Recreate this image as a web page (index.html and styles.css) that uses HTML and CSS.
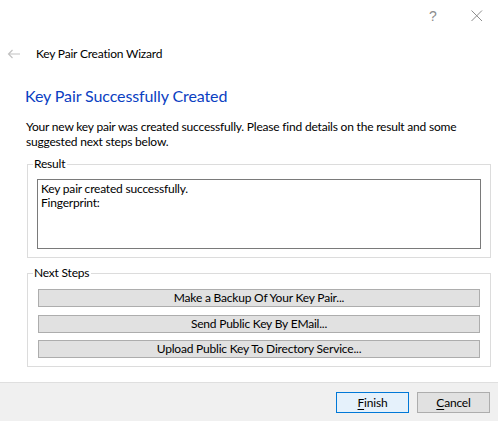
FILE: index.html
```html
<!DOCTYPE html>
<html>
<head>
<meta charset="utf-8">
<link rel="stylesheet" href="styles.css">
</head>
<body>
<div class="window">
  <div class="caption">
    <span class="cap-btn help">?</span>
    <span class="cap-btn close">
      <svg width="12" height="12" viewBox="0 0 12 12"><path d="M0.5 0.5 L11 11 M11 0.5 L0.5 11" stroke="#8c8c8c" stroke-width="1" fill="none"/></svg>
    </span>
  </div>
  <div class="header">
    <svg class="back" width="14" height="10" viewBox="0 0 14 10"><path d="M13 5 H1.5 M5.5 1 L1.5 5 L5.5 9" stroke="#c2c2c2" stroke-width="1.2" fill="none"/></svg>
    <span class="wtitle">Key Pair Creation Wizard</span>
  </div>
  <div class="content">
    <h1 class="heading">Key Pair Successfully Created</h1>
    <p class="intro">Your new key pair was created successfully. Please find details on the result and some suggested next steps below.</p>
    <div class="group result">
      <span class="group-title">Result</span>
      <div class="textbox">Key pair created successfully.<br>Fingerprint:</div>
    </div>
    <div class="group steps">
      <span class="group-title">Next Steps</span>
      <button class="step">Make a Backup Of Your Key Pair...</button>
      <button class="step">Send Public Key By EMail...</button>
      <button class="step">Upload Public Key To Directory Service...</button>
    </div>
  </div>
  <div class="footer">
    <button class="dlg default"><u>F</u>inish</button>
    <button class="dlg"><u>C</u>ancel</button>
  </div>
</div>
</body>
</html>
```

FILE: styles.css
```css
* { box-sizing: border-box; }
html, body { margin: 0; padding: 0; background: #fff; }
body {
  font-family: "Lato", "Liberation Sans", sans-serif;
  font-size: 12px;
  letter-spacing: -0.2px;
  color: #000;
}
.window {
  width: 498px;
  height: 421px;
  display: flex;
  flex-direction: column;
  background: #fff;
}
.caption {
  height: 30px;
  display: flex;
  justify-content: flex-end;
  align-items: stretch;
}
.cap-btn {
  display: flex;
  align-items: center;
  justify-content: center;
}
.help {
  width: 46px;
  font-family: "Liberation Sans", sans-serif;
  font-size: 14px;
  letter-spacing: 0;
  color: #8c8c8c;
  padding-top: 1px;
}
.close { width: 42px; padding-top: 1px; }
.header {
  display: flex;
  align-items: flex-start;
  padding-top: 16px;
  height: 32px;
}
.back { margin: 3px 0 0 7px; }
.wtitle {
  margin-left: 15px;
  line-height: 16px;
  height: 16px;
}
.content {
  padding: 0 0 0 27px;
  flex: 1;
}
.heading {
  margin: 24px 0 0 -2px;
  font-size: 16px;
  line-height: 20px;
  font-weight: normal;
  letter-spacing: -0.1px;
  color: #0a40c2;
}
.intro {
  margin: 13px 0 0 -1px;
  width: 440px;
  line-height: 15px;
}
.group {
  position: relative;
  width: 464px;
  border: 1px solid #dcdcdc;
}
.group-title {
  position: absolute;
  top: -8px;
  left: 5px;
  padding: 0 2px 0 1px;
  background: #fff;
  line-height: 14px;
}
.result {
  margin-top: 15px;
  padding: 14px 9px 8px 9px;
}
.textbox {
  height: 70px;
  border: 1px solid #7a7a7a;
  padding: 2px 3px;
  line-height: 13.5px;
}
.steps {
  margin-top: 15px;
  height: 94px;
  padding: 15px 10px 0 10px;
  display: flex;
  flex-direction: column;
  gap: 7.5px;
}
button {
  font-family: inherit;
  font-size: 12px;
  letter-spacing: -0.2px;
  color: #000;
  margin: 0;
  padding: 0;
}
.step {
  height: 18px;
  width: 100%;
  background: #e1e1e1;
  border: 1px solid #adadad;
  line-height: 16px;
  text-align: center;
}
.footer {
  height: 39px;
  background: #f0f0f0;
  border-top: 1px solid #dfdfdf;
  display: flex;
  justify-content: flex-end;
  gap: 8px;
  padding: 9px 8px 0 0;
}
.dlg {
  width: 73px;
  height: 21px;
  background: #e1e1e1;
  border: 1px solid #adadad;
  line-height: 19px;
}
.dlg.default {
  background: #e5f1fb;
  border-color: #0078d7;
}
.dlg u { text-decoration: underline; text-underline-offset: 2px; }
```
